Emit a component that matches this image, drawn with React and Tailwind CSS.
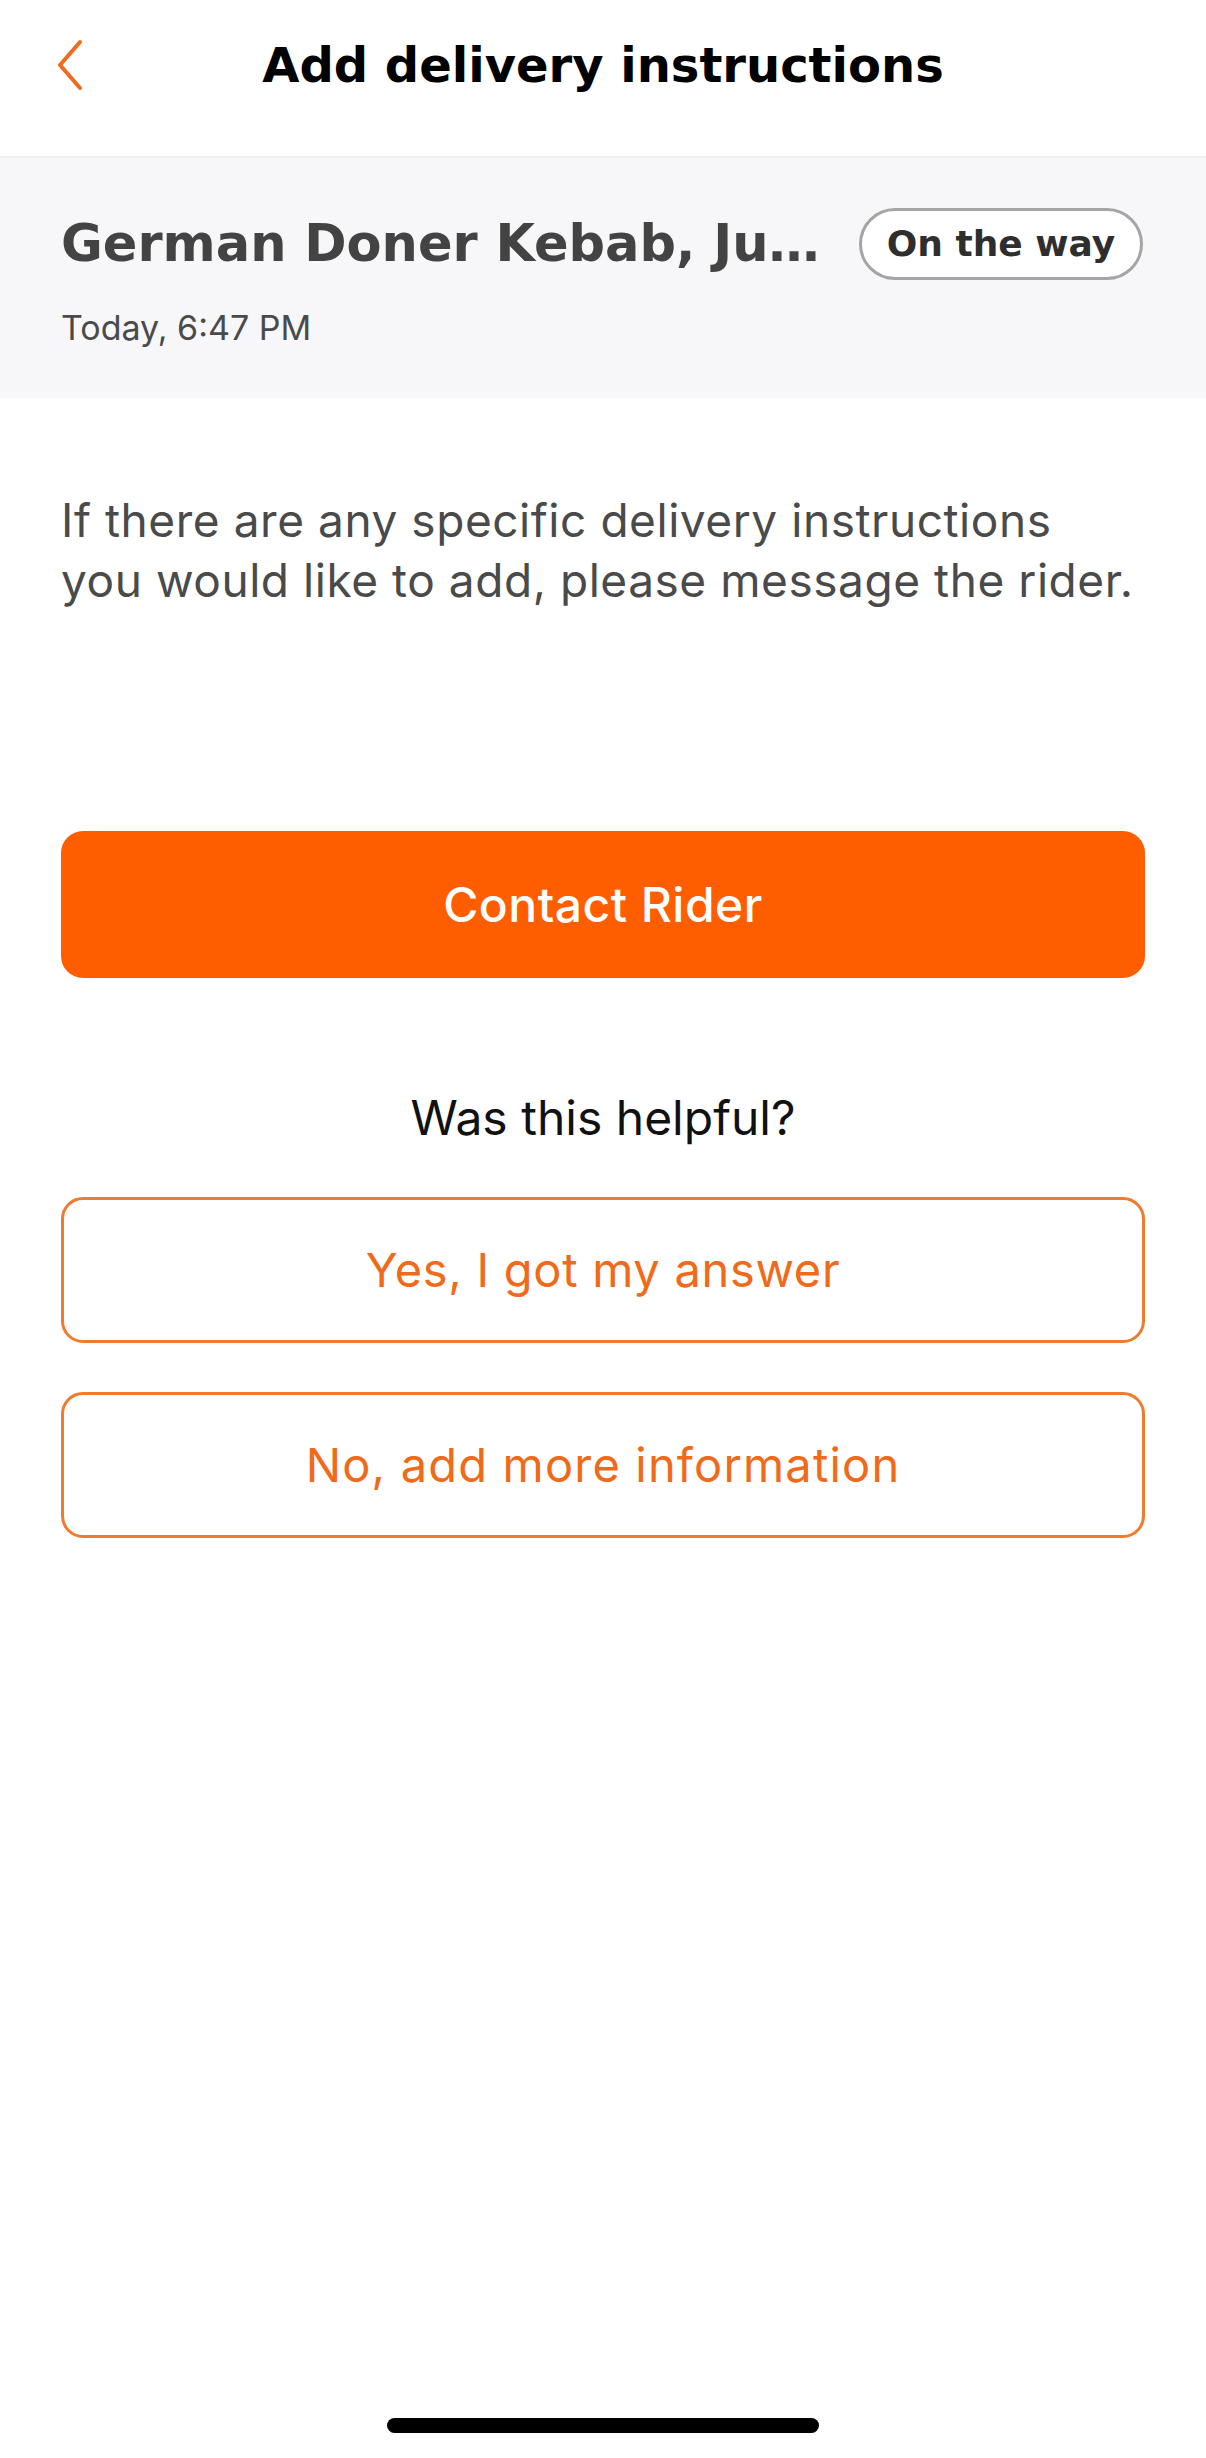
const ORANGE = '#ff5e00';

const BackIcon = () => (
  <svg width="28" height="52" viewBox="0 0 28 52" fill="none">
    <path d="M24 3 L4 26 L24 49" stroke="#f26a1b" strokeWidth="4" strokeLinecap="round" strokeLinejoin="round" />
  </svg>
);

const App = () => {
  return (
    <div className="w-[1206px] min-h-[2458px] bg-white flex flex-col font-['Inter',sans-serif]">
      {/* Header */}
      <div className="h-[158px] pb-[27px] border-b-2 border-[#eeeeee] grid grid-cols-[1fr_auto_1fr] items-center">
        <div className="pl-[56px] flex items-center">
          <BackIcon />
        </div>
        <h1 className="font-['DejaVu_Sans',sans-serif] font-bold text-[48px] leading-[56px] text-black">
          Add delivery instructions
        </h1>
        <div />
      </div>

      {/* Order summary */}
      <div className="bg-[#f7f7f9] pl-[61px] pr-[63px] pt-[50px] pb-[50px]">
        <div className="flex items-center justify-between gap-6">
          <p className="font-['DejaVu_Sans',sans-serif] font-bold text-[51px] leading-[60px] text-[#434343] whitespace-nowrap">
            German Doner Kebab, Ju…
          </p>
          <span className="h-[72px] w-[284px] shrink-0 rounded-full border-[3px] border-[#a5a5a5] bg-white flex items-center justify-center font-['DejaVu_Sans',sans-serif] font-bold text-[36px] text-[#2e2e2e]">
            On the way
          </span>
        </div>
        <p className="mt-[27px] text-[34px] leading-[41px] text-[#4a4a4a]">Today, 6:47 PM</p>
      </div>

      {/* Body */}
      <div className="px-[61px] pt-[92px] flex flex-col">
        <p className="text-[46px] leading-[60px] tracking-[0.012em] text-[#4a4a4a] whitespace-nowrap">
          If there are any specific delivery instructions
          <br />
          you would like to add, please message the rider.
        </p>

        <button className="mt-[221px] h-[147px] w-full rounded-[22px] text-white text-[48px] tracking-[0.01em] font-medium" style={{ backgroundColor: ORANGE }}>
          Contact Rider
        </button>

        <p className="mt-[112px] text-center text-[48px] leading-[56px] text-[#111111]">Was this helpful?</p>

        <button className="mt-[51px] h-[146px] w-full rounded-[22px] border-[3px] border-[#f07a2e] bg-white text-[47px] tracking-[0.015em] text-[#f06a1a]">
          Yes, I got my answer
        </button>
        <button className="mt-[49px] h-[146px] w-full rounded-[22px] border-[3px] border-[#f07a2e] bg-white text-[47px] tracking-[0.025em] text-[#f06a1a]">
          No, add more information
        </button>
      </div>

      <div className="flex-1" />

      {/* Home indicator */}
      <div className="flex justify-center pb-[25px]">
        <div className="w-[432px] h-[15px] rounded-full bg-black" />
      </div>
    </div>
  );
};

export default App;
